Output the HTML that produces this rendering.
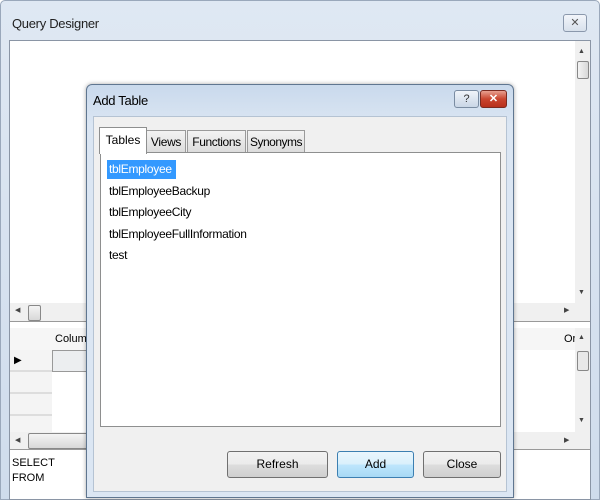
<!DOCTYPE html>
<html><head><style>
*{margin:0;padding:0;box-sizing:border-box}
body{width:600px;height:500px;overflow:hidden;background:#fff;font-family:"Liberation Sans",sans-serif;font-size:12px;color:#000;position:relative}
.a{position:absolute}
.btn{position:absolute;border:1px solid #707070;border-radius:3px;background:linear-gradient(#f2f2f2,#ebebeb 50%,#dddddd 51%,#cfcfcf);text-align:center;line-height:25px;font-size:12px}
</style></head><body>
<div class="a" style="left:0;top:0;width:600px;height:500px;background:linear-gradient(#dfe8f3,#cfdcec);border:1px solid #9aa8bb;border-radius:5px 5px 0 0"></div>
<div class="a" style="left:12px;top:16px;font-size:13px;color:#222;letter-spacing:-0.3px">Query Designer</div>
<div class="a" style="left:563px;top:14px;width:24px;height:18px;border:1px solid #8a98ac;border-radius:3px;background:linear-gradient(#f2f5fa,#d8e1ec);text-align:center;font-size:11px;line-height:16px;color:#555">✕</div>
<div class="a" style="left:9px;top:40px;width:582px;height:460px;background:#fff;border:1px solid #8a95a5"></div>
<div class="a" style="left:575px;top:41px;width:15px;height:263px;background:#f0f0f0"></div>
<div class="a" style="left:578px;top:48px;font-size:7px;color:#444">▲</div>
<div class="a" style="left:577px;top:61px;width:12px;height:18px;border:1px solid #888;border-radius:2px;background:linear-gradient(90deg,#f4f4f4,#d8d8d8)"></div>
<div class="a" style="left:578px;top:289px;font-size:7px;color:#444">▼</div>
<div class="a" style="left:10px;top:303px;width:580px;height:19px;background:#f0f0f0;border-bottom:1px solid #999"></div>
<div class="a" style="left:15px;top:306px;font-size:7px;color:#444">◀</div>
<div class="a" style="left:28px;top:305px;width:13px;height:16px;border:1px solid #888;border-radius:2px;background:linear-gradient(#f4f4f4,#d8d8d8)"></div>
<div class="a" style="left:564px;top:306px;font-size:7px;color:#444">▶</div>
<div class="a" style="left:10px;top:328px;width:565px;height:22px;background:#f6f6f6"></div>
<div class="a" style="left:55px;top:333px;font-size:11px">Column</div>
<div class="a" style="left:564px;top:333px;font-size:11px">Or</div>
<div class="a" style="left:575px;top:328px;width:15px;height:104px;background:#f0f0f0"></div>
<div class="a" style="left:578px;top:334px;font-size:7px;color:#444">▲</div>
<div class="a" style="left:577px;top:351px;width:12px;height:20px;border:1px solid #888;border-radius:2px;background:#e8e8e8"></div>
<div class="a" style="left:578px;top:417px;font-size:7px;color:#444">▼</div>
<div class="a" style="left:10px;top:350px;width:42px;height:82px;background:repeating-linear-gradient(#f4f4f4 0,#f4f4f4 20px,#ddd 20px,#ddd 22px)"></div>
<div class="a" style="left:14px;top:355px;font-size:10px">▶</div>
<div class="a" style="left:52px;top:350px;width:40px;height:22px;border:1px solid #999;background:#eceef0"></div>
<div class="a" style="left:10px;top:432px;width:580px;height:18px;background:#f0f0f0;border-bottom:1px solid #999"></div>
<div class="a" style="left:15px;top:436px;font-size:7px;color:#444">◀</div>
<div class="a" style="left:28px;top:433px;width:70px;height:16px;border:1px solid #888;border-radius:2px;background:linear-gradient(#f4f4f4,#d8d8d8)"></div>
<div class="a" style="left:564px;top:436px;font-size:7px;color:#444">▶</div>
<div class="a" style="left:12px;top:456px;font-size:11px;line-height:15px">SELECT<br>FROM</div>
<div class="a" style="left:86px;top:84px;width:428px;height:414px;background:linear-gradient(#c9d9ec,#dbe6f3 40px,#dbe6f3);border:1px solid #5f7690;border-radius:6px 6px 0 0;box-shadow:0 0 4px rgba(0,0,0,.35)"></div>
<div class="a" style="left:93px;top:93px;font-size:13px;letter-spacing:-0.3px">Add Table</div>
<div class="a" style="left:454px;top:90px;width:25px;height:18px;border:1px solid #7a8ca2;border-radius:3px;background:linear-gradient(#f0f4f9,#c9d6e6);text-align:center;font-size:11px;line-height:16px;color:#333">?</div>
<div class="a" style="left:480px;top:90px;width:27px;height:18px;border:1px solid #7a2a20;border-radius:3px;background:linear-gradient(#e8a090,#c9452f 50%,#b8301c);text-align:center;font-size:11px;line-height:16px;color:#fff;font-weight:bold">✕</div>
<div class="a" style="left:93px;top:116px;width:414px;height:376px;background:#f0f0f0;border:1px solid #b5c3d3"></div>
<div class="a" style="left:146px;top:130px;width:40px;height:23px;border:1px solid #9a9a9a;background:linear-gradient(#f3f3f3,#dcdcdc);text-align:center;line-height:22px;letter-spacing:-0.3px">Views</div>
<div class="a" style="left:187px;top:130px;width:59px;height:23px;border:1px solid #9a9a9a;background:linear-gradient(#f3f3f3,#dcdcdc);text-align:center;line-height:22px;letter-spacing:-0.4px">Functions</div>
<div class="a" style="left:247px;top:130px;width:58px;height:23px;border:1px solid #9a9a9a;background:linear-gradient(#f3f3f3,#dcdcdc);text-align:center;line-height:22px;letter-spacing:-0.5px">Synonyms</div>
<div class="a" style="left:100px;top:152px;width:401px;height:275px;background:#fff;border:1px solid #8e8f8f"></div>
<div class="a" style="left:99px;top:127px;width:48px;height:27px;border:1px solid #8e8f8f;border-bottom:none;background:#fff;text-align:center;line-height:25px">Tables</div>
<div class="a" style="left:107px;top:160px;width:69px;height:19px;background:#3399ff"></div>
<div class="a" style="left:109px;top:159px;line-height:21.6px;letter-spacing:-0.3px"><span style="color:#fff">tblEmployee</span><br>tblEmployeeBackup<br>tblEmployeeCity<br>tblEmployeeFullInformation<br>test</div>
<div class="btn" style="left:227px;top:451px;width:101px;height:27px">Refresh</div>
<div class="btn" style="left:337px;top:451px;width:77px;height:27px;border-color:#3c7fb1;background:linear-gradient(#eaf6fd,#d9f0fc 50%,#bee6fd 51%,#a7d9f5)">Add</div>
<div class="btn" style="left:423px;top:451px;width:78px;height:27px">Close</div>
</body></html>
